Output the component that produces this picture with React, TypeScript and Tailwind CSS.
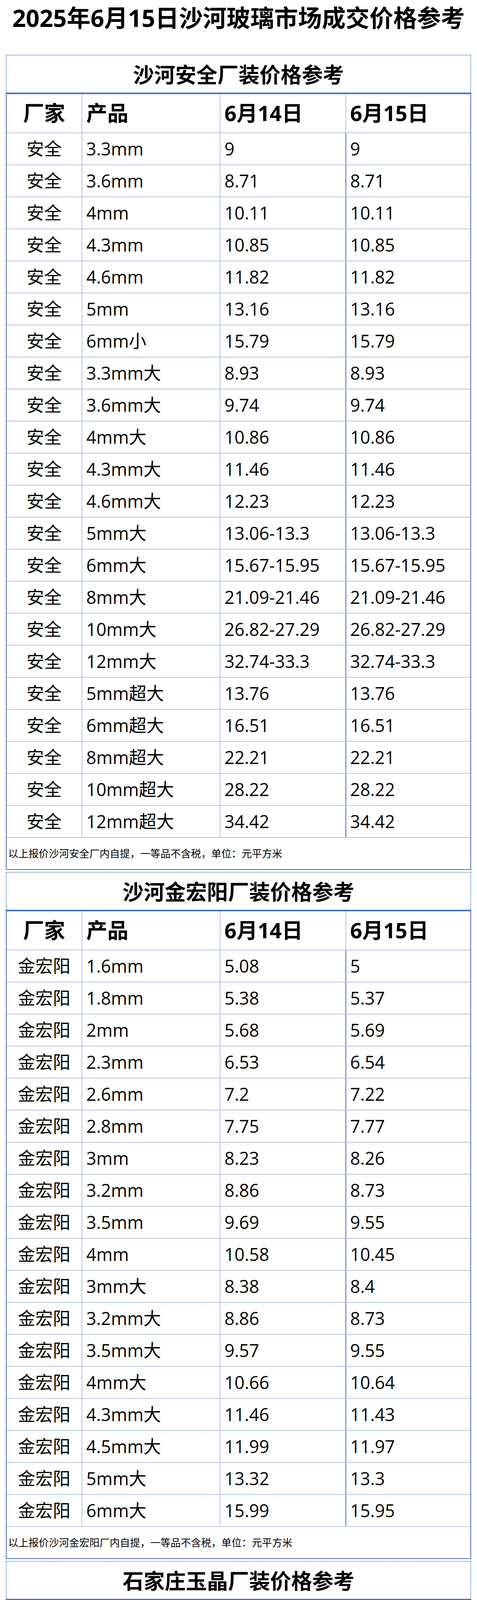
import React from "react";

type Row = [string, string, string];

const anquan: Row[] = [
  ["3.3mm", "9", "9"],
  ["3.6mm", "8.71", "8.71"],
  ["4mm", "10.11", "10.11"],
  ["4.3mm", "10.85", "10.85"],
  ["4.6mm", "11.82", "11.82"],
  ["5mm", "13.16", "13.16"],
  ["6mm小", "15.79", "15.79"],
  ["3.3mm大", "8.93", "8.93"],
  ["3.6mm大", "9.74", "9.74"],
  ["4mm大", "10.86", "10.86"],
  ["4.3mm大", "11.46", "11.46"],
  ["4.6mm大", "12.23", "12.23"],
  ["5mm大", "13.06-13.3", "13.06-13.3"],
  ["6mm大", "15.67-15.95", "15.67-15.95"],
  ["8mm大", "21.09-21.46", "21.09-21.46"],
  ["10mm大", "26.82-27.29", "26.82-27.29"],
  ["12mm大", "32.74-33.3", "32.74-33.3"],
  ["5mm超大", "13.76", "13.76"],
  ["6mm超大", "16.51", "16.51"],
  ["8mm超大", "22.21", "22.21"],
  ["10mm超大", "28.22", "28.22"],
  ["12mm超大", "34.42", "34.42"],
];

const jinhongyang: Row[] = [
  ["1.6mm", "5.08", "5"],
  ["1.8mm", "5.38", "5.37"],
  ["2mm", "5.68", "5.69"],
  ["2.3mm", "6.53", "6.54"],
  ["2.6mm", "7.2", "7.22"],
  ["2.8mm", "7.75", "7.77"],
  ["3mm", "8.23", "8.26"],
  ["3.2mm", "8.86", "8.73"],
  ["3.5mm", "9.69", "9.55"],
  ["4mm", "10.58", "10.45"],
  ["3mm大", "8.38", "8.4"],
  ["3.2mm大", "8.86", "8.73"],
  ["3.5mm大", "9.57", "9.55"],
  ["4mm大", "10.66", "10.64"],
  ["4.3mm大", "11.46", "11.43"],
  ["4.5mm大", "11.99", "11.97"],
  ["5mm大", "13.32", "13.3"],
  ["6mm大", "15.99", "15.95"],
];

const yujing: Row[] = [
  ["4mm大", "10.59", "10.39"],
  ["4.3mm大", "11.38", "11.16"],
  ["5mm大", "13.24", "13"],
  ["6mm大", "15.89", "15.59"],
  ["7.2mm大", "19.06", "18.7"],
  ["7.5mm大", "19.86", "19.48"],
  ["8mm大", "21.37", "20.97"],
  ["10mm大", "25.96", "25.46"],
  ["12mm大", "32.93", "32.33"],
];

function Section({
  title,
  maker,
  rows,
  note,
  green,
  first,
}: {
  title: string;
  maker: string;
  rows: Row[];
  note: string;
  green?: boolean;
  first?: boolean;
}) {
  return (
    <div className={first ? "mx-[15px]" : "mx-[15px] mt-[5px]"}>
      <div className="flex h-[97px] items-center justify-center border-x-2 border-t-2 border-dotted border-[#4472c4] pt-[2px]">
        <span className="text-[54px] font-bold leading-none text-black">{title}</span>
      </div>
      <div className="border-x-2 border-t-4 border-b-2 border-[#4472c4]">
        <div className="flex h-[100px] border-b-2 border-[#b4c6e7] text-[54px] font-bold text-black">
          <div className="flex w-[194px] items-center justify-center border-r-2 border-[#b4c6e7]">厂家</div>
          <div className="flex w-[354px] items-center border-r-2 border-[#b4c6e7] pl-[10px]">产品</div>
          <div className="flex w-[322px] items-center border-r-2 border-[#b4c6e7] pl-[10px]">6月14日</div>
          <div className="flex flex-1 items-center pl-[10px]">6月15日</div>
        </div>
        {rows.map((r, i) => (
          <div key={i} className="flex h-[82px] border-b-2 border-[#b4c6e7] text-[45px] text-black">
            <div className="flex w-[194px] items-center justify-center border-r-2 border-[#b4c6e7]">{maker}</div>
            <div className="flex w-[354px] items-center border-r-2 border-[#b4c6e7] pl-[10px]">{r[0]}</div>
            <div className="flex w-[322px] items-center border-r-2 border-[#4472c4] pl-[10px]">{r[1]}</div>
            <div className={green ? "flex flex-1 items-center pl-[10px] text-[#00b050]" : "flex flex-1 items-center pl-[10px]"}>{r[2]}</div>
          </div>
        ))}
        <div className="flex h-[80px] items-center pl-[4px] text-[26px] text-black">{note}</div>
      </div>
    </div>
  );
}

export default function App() {
  return (
    <div className="w-[1222px] bg-white pb-[16px] font-['Open_Sans','Noto_Sans_CJK_SC',sans-serif] leading-tight">
      <div className="flex h-[140px] items-start justify-center pt-[6px]">
        <h1 className="text-[61px] font-bold leading-[80px] text-black">2025年6月15日沙河玻璃市场成交价格参考</h1>
      </div>
      <Section
        first
        title="沙河安全厂装价格参考"
        maker="安全"
        rows={anquan}
        note="以上报价沙河安全厂内自提，一等品不含税，单位：元平方米"
      />
      <Section
        title="沙河金宏阳厂装价格参考"
        maker="金宏阳"
        rows={jinhongyang}
        note="以上报价沙河金宏阳厂内自提，一等品不含税，单位：元平方米"
      />
      <Section
        title="石家庄玉晶厂装价格参考"
        maker="玉晶"
        rows={yujing}
        green
        note="以上报价石家庄玉晶厂内自提，一等品不含税，单位：元平方米"
      />
    </div>
  );
}
